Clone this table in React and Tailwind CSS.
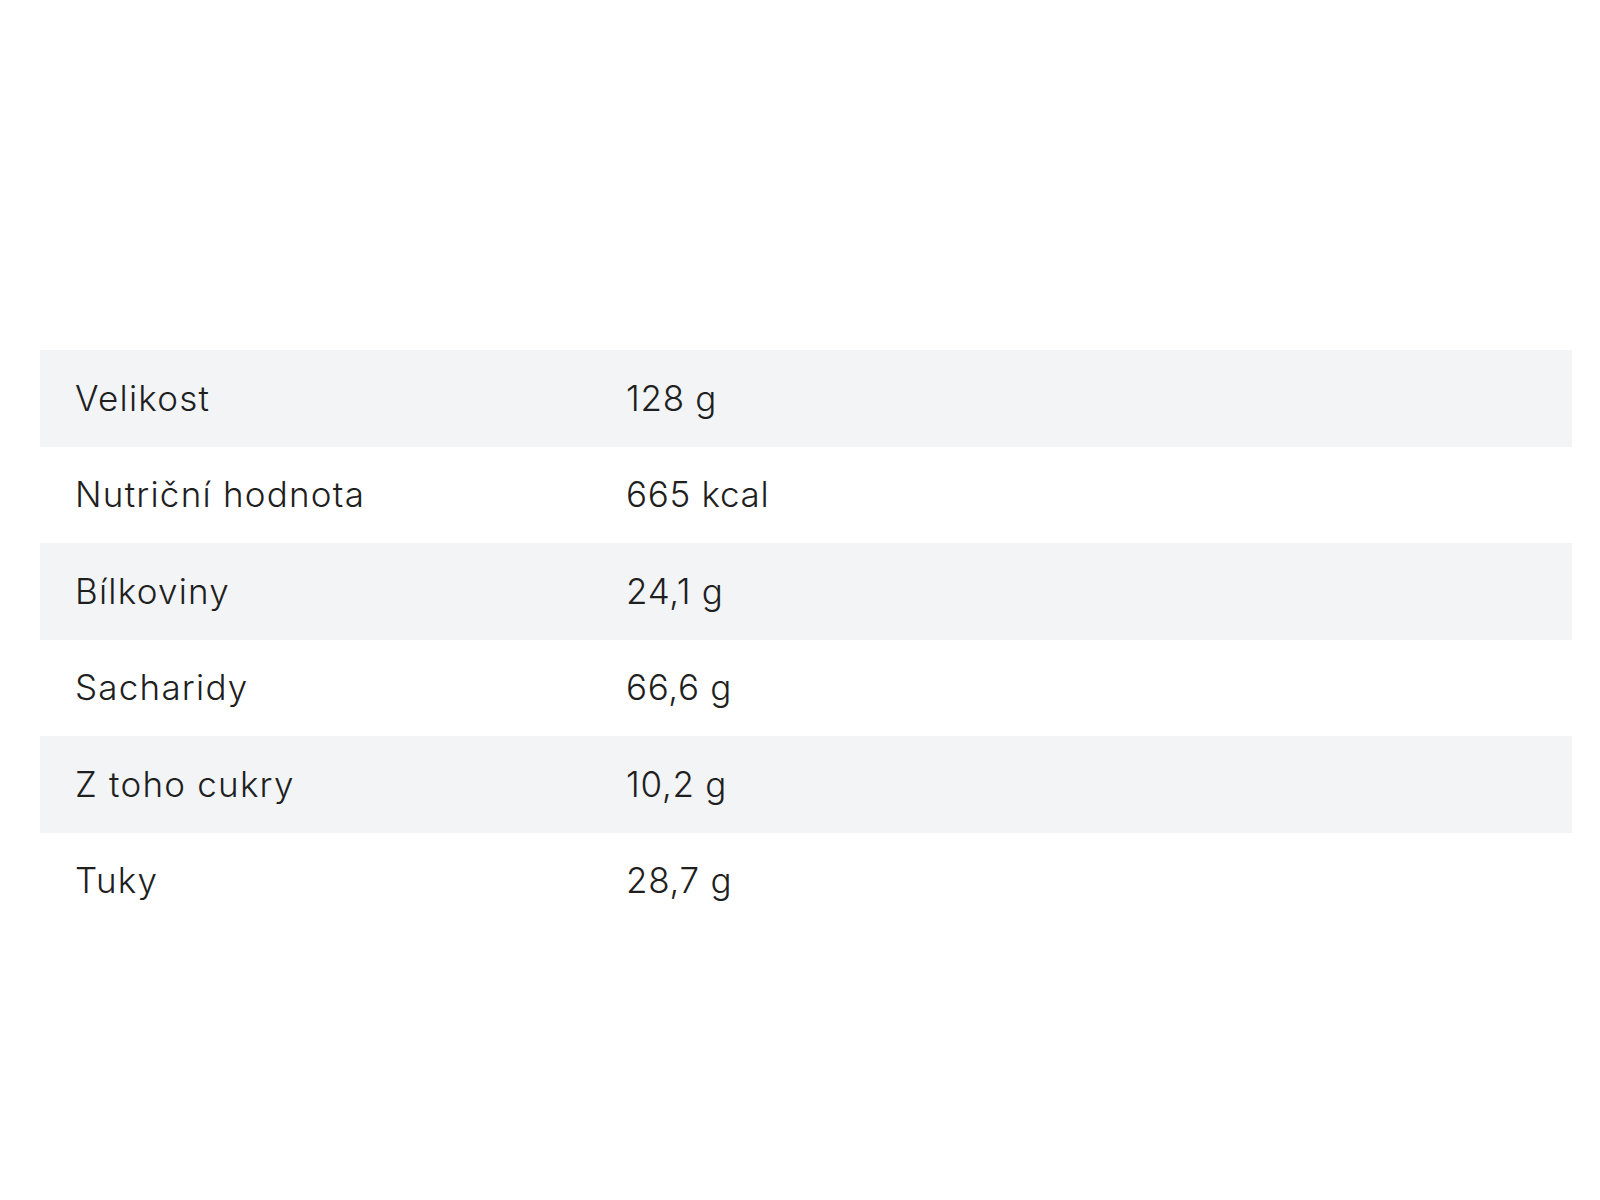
export default function App() {
  const rows = [
    ["Velikost", "128 g"],
    ["Nutriční hodnota", "665 kcal"],
    ["Bílkoviny", "24,1 g"],
    ["Sacharidy", "66,6 g"],
    ["Z toho cukry", "10,2 g"],
    ["Tuky", "28,7 g"],
  ];
  return (
    <div className="w-[1600px] h-[1200px] bg-white pt-[350px] pl-[40px] pr-[28px] font-['Inter',sans-serif] text-[#1f1f1f]">
      <div className="flex flex-col">
        {rows.map(([k, v], i) => (
          <div
            key={k}
            className={
              i % 2 === 0
                ? "flex items-center h-[96.5px] bg-[#f2f4f6]"
                : "flex items-center h-[96.5px] bg-white"
            }
          >
            <div className="w-[586px] pl-[35px] text-[35px] leading-none font-[350] tracking-[0.035em]">{k}</div>
            <div className="text-[35px] leading-none font-[350] tracking-[0.02em]">{v}</div>
          </div>
        ))}
      </div>
    </div>
  );
}
